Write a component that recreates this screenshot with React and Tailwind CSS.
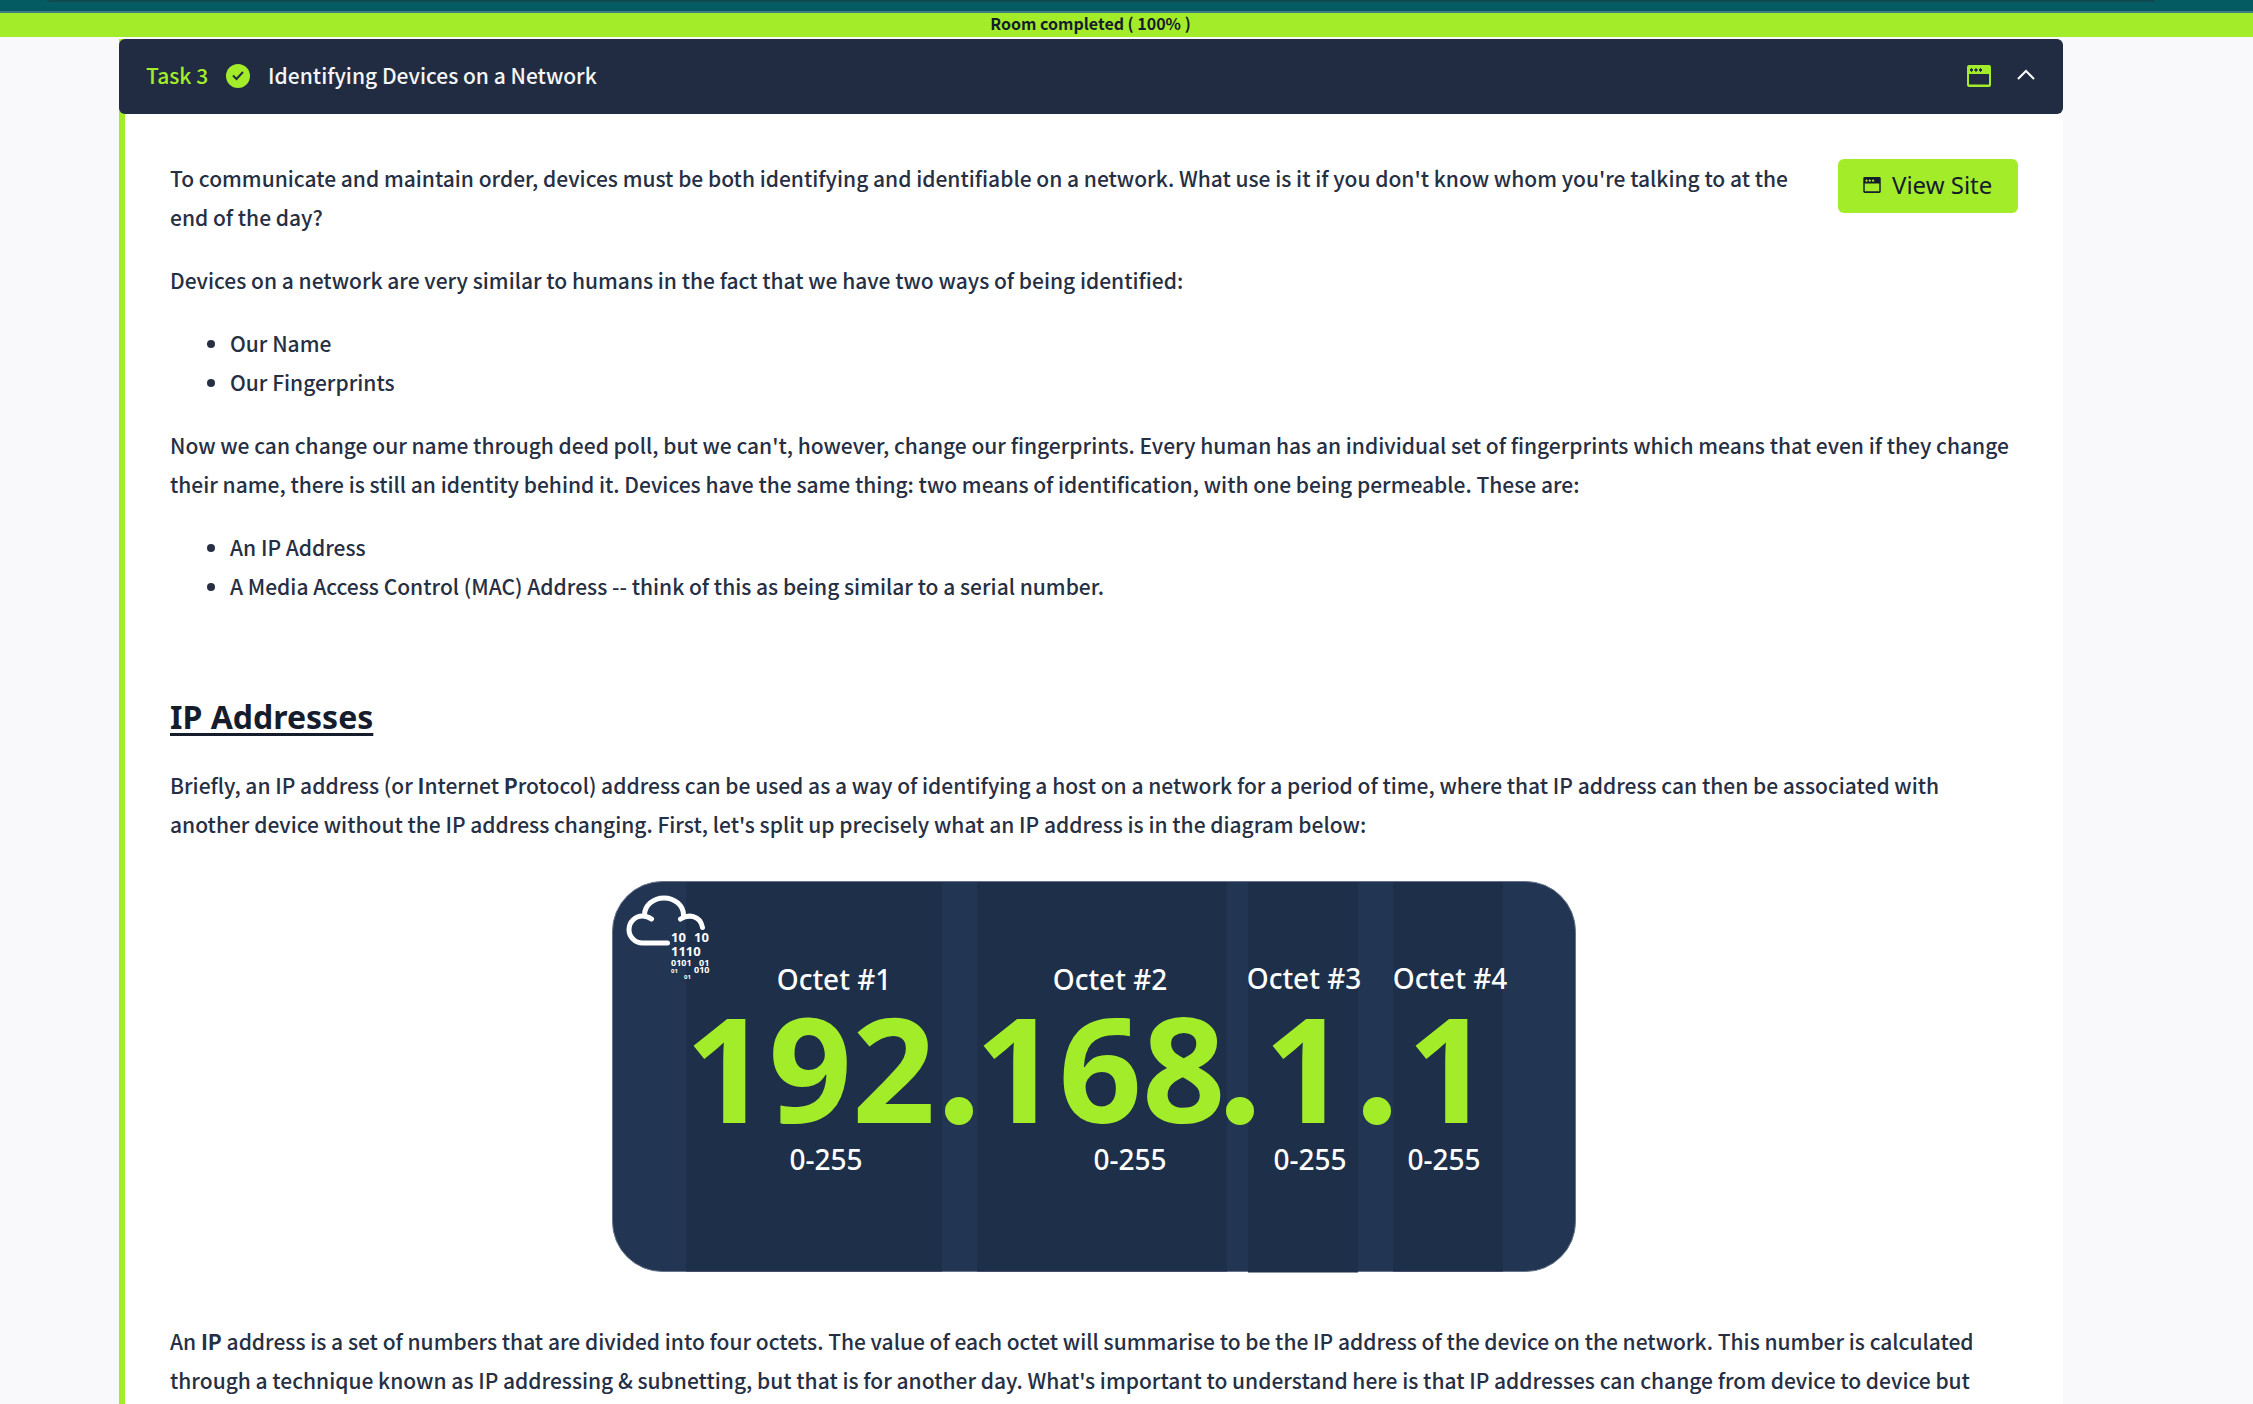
const BODY = "font-['Noto_Sans_CJK_SC','Noto_Sans',sans-serif]";

function BrowserIcon({ className }) {
  return (
    <svg viewBox="0 0 24 22" className={className} aria-hidden="true">
      <path
        fill="currentColor"
        fillRule="evenodd"
        d="M2 0h20a2 2 0 0 1 2 2v18a2 2 0 0 1-2 2H2a2 2 0 0 1-2-2V2a2 2 0 0 1 2-2Zm0 9v10.500h20V9ZM3 4v2h1v1h1V6h1V4H5V3H4v1Zm4.500 0v2h1v1h1V6h1V4h-1V3h-1v1Zm4.500 0v2h1v1h1V6h1V4h-1V3h-1v1Z"
      />
    </svg>
  );
}

function CheckBadge() {
  return (
    <svg viewBox="0 0 24 24" className="size-6" role="img" aria-label="Completed">
      <circle cx="12" cy="12" r="12" fill="#a3ec2a" />
      <path d="M7 11.500l3.500 3.500L17 8" fill="none" stroke="#212c42" strokeWidth="2" />
    </svg>
  );
}

const OCTETS = [
  { label: "Octet #1", lx: 222, ly: 109, x: 74, w: 256, h: 391, value: "192", vx: 73, rx: 214 },
  { label: "Octet #2", lx: 498, ly: 109, x: 365, w: 250, h: 391, value: "168", vx: 363, rx: 518 },
  { label: "Octet #3", lx: 692, ly: 108, x: 636, w: 110, h: 392, value: "1", vx: 652, rx: 698 },
  { label: "Octet #4", lx: 838, ly: 108, x: 781, w: 110, h: 391, value: "1", vx: 795, rx: 832 },
];

const RAIN = [
  { t: "10", x: 59, y: 61, s: 13 },
  { t: "10", x: 82, y: 61, s: 13 },
  { t: "1110", x: 59, y: 75, s: 13 },
  { t: "0101", x: 59, y: 85, s: 9 },
  { t: "01", x: 87, y: 85, s: 9 },
  { t: "01", x: 59, y: 92, s: 6 },
  { t: "010", x: 82, y: 92, s: 9 },
  { t: "01", x: 72, y: 98, s: 6 },
];

function IpDiagram() {
  return (
    <svg
      viewBox="0 0 964 392"
      className="mx-auto mt-[37px] block w-[964px] max-w-full font-['Noto_Sans',sans-serif]"
      role="img"
      aria-label="The four octets of an IP address"
    >
      <rect x="0.500" y="0.500" width="963" height="390" rx="50" fill="#223553" stroke="#66738a" />
      {OCTETS.map((o) => (
        <rect key={o.label} x={o.x} y="1" width={o.w} height={o.h - 1.500} fill="#1e2f4a" />
      ))}
      <g fill="none" stroke="#fff" strokeWidth="5" strokeLinecap="round">
        <path d="M55.500 62H30.500A13.500 13.500 0 0 1 30.500 35Q35.500 35 39.500 38" />
        <path d="M32.500 34A19.500 17 0 0 1 71.500 34" />
        <path d="M68.500 38C76 33 88 34 90.500 46.500" />
      </g>
      <g fill="#fff" fontWeight="700">
        {RAIN.map((r, i) => (
          <text key={i} x={r.x} y={r.y} fontSize={r.s}>{r.t}</text>
        ))}
      </g>
      <g fill="#fff" fontSize="28" fontWeight="500" textAnchor="middle">
        {OCTETS.map((o) => (
          <g key={o.label}>
            <text x={o.lx} y={o.ly}>{o.label}</text>
            <text x={o.rx} y="289">0-255</text>
          </g>
        ))}
      </g>
      <g fill="#a3ec2a" fontSize="146" fontWeight="700">
        {OCTETS.map((o) => (
          <text key={o.label} x={o.vx} y="242">{o.value}</text>
        ))}
      </g>
      <g fill="#a3ec2a">
        <circle cx="347" cy="230" r="14" />
        <circle cx="628" cy="230" r="14" />
        <circle cx="765" cy="230" r="14" />
      </g>
    </svg>
  );
}

export default function App() {
  return (
    <div className={`h-screen overflow-hidden bg-[#f9f9fb] text-[21px] leading-[39px] font-medium text-[#262f43] ${BODY}`}>
      <div className="h-[13px] border-b-2 border-[#3f8084] bg-[#045b61]">
        <div className="mr-[98px] ml-[47px] h-[2px] rounded-b bg-[#0f4a50]" />
      </div>
      <div role="status" className="h-6 bg-[#a3ec2a] pr-[72px] text-center text-base leading-5 font-bold text-[#151c2b]">
        Room completed ( 100% )
      </div>

      <main className="mt-[2px] mr-[190px] ml-[119px]">
        <section className="border-l-6 border-[#a3ec2a] bg-white pb-12">
          <header className="-ml-[6px] flex h-[75px] items-center rounded-md bg-[#212c42] pr-7 pb-[2px] pl-[27px] text-[#f4f5f7]">
            <span className="text-[#a3ec2a]">Task 3</span>
            <span className="mx-[18px]"><CheckBadge /></span>
            <h1>Identifying Devices on a Network</h1>
            <BrowserIcon className="ml-auto h-[22px] w-6 text-[#a3ec2a]" />
            <button type="button" aria-label="Collapse task" className="ml-[26px]">
              <svg viewBox="0 0 18 11" className="mb-[2px] h-[11px] w-[18px]" fill="none" stroke="#fff" strokeWidth="2">
                <path d="M1 10l8-8 8 8" />
              </svg>
            </button>
          </header>

          <div className="px-[45px] pt-[45px]">
            <a
              href="#site"
              className="float-right ml-10 flex h-[54px] w-[180px] items-center rounded-md bg-[#a3ec2a] pb-[2px] pl-[25px] font-['Noto_Sans',sans-serif] text-2xl font-normal text-[#151c2b]"
            >
              <BrowserIcon className="mr-[11px] h-4 w-[18px]" />
              View Site
            </a>
            <p className="mb-6">
              To communicate and maintain order, devices must be both identifying and identifiable on a network. What use is it if you don't know whom you're talking to at the end of the day?
            </p>
            <p className="mb-6">
              Devices on a network are very similar to humans in the fact that we have two ways of being identified:
            </p>
            <ul className="mb-6 list-disc pl-[60px]">
              <li>Our Name</li>
              <li>Our Fingerprints</li>
            </ul>
            <p className="mb-6">
              Now we can change our name through deed poll, but we can't, however, change our fingerprints. Every human has an individual set of fingerprints which means that even if they change their name, there is still an identity behind it. Devices have the same thing: two means of identification, with one being permeable. These are:
            </p>
            <ul className="list-disc pl-[60px]">
              <li>An IP Address</li>
              <li>A Media Access Control (MAC) Address -- think of this as being similar to a serial number.</li>
            </ul>
            <h2 className="mt-[91px] mb-[29px] font-['Noto_Sans',sans-serif] text-[32px] leading-10 font-bold text-[#151c2b] underline decoration-3 underline-offset-4">
              IP Addresses
            </h2>
            <p>
              Briefly, an IP address (or <b>I</b>nternet <b>P</b>rotocol) address can be used as a way of identifying a host on a network for a period of time, where that IP address can then be associated with another device without the IP address changing. First, let's split up precisely what an IP address is in the diagram below:
            </p>
            <IpDiagram />
            <p className="mt-[49px]">
              An <b>IP</b> address is a set of numbers that are divided into four octets. The value of each octet will summarise to be the IP address of the device on the network. This number is calculated through a technique known as IP addressing &amp; subnetting, but that is for another day. What's important to understand here is that IP addresses can change from device to device but
            </p>
          </div>
        </section>
      </main>
    </div>
  );
}
